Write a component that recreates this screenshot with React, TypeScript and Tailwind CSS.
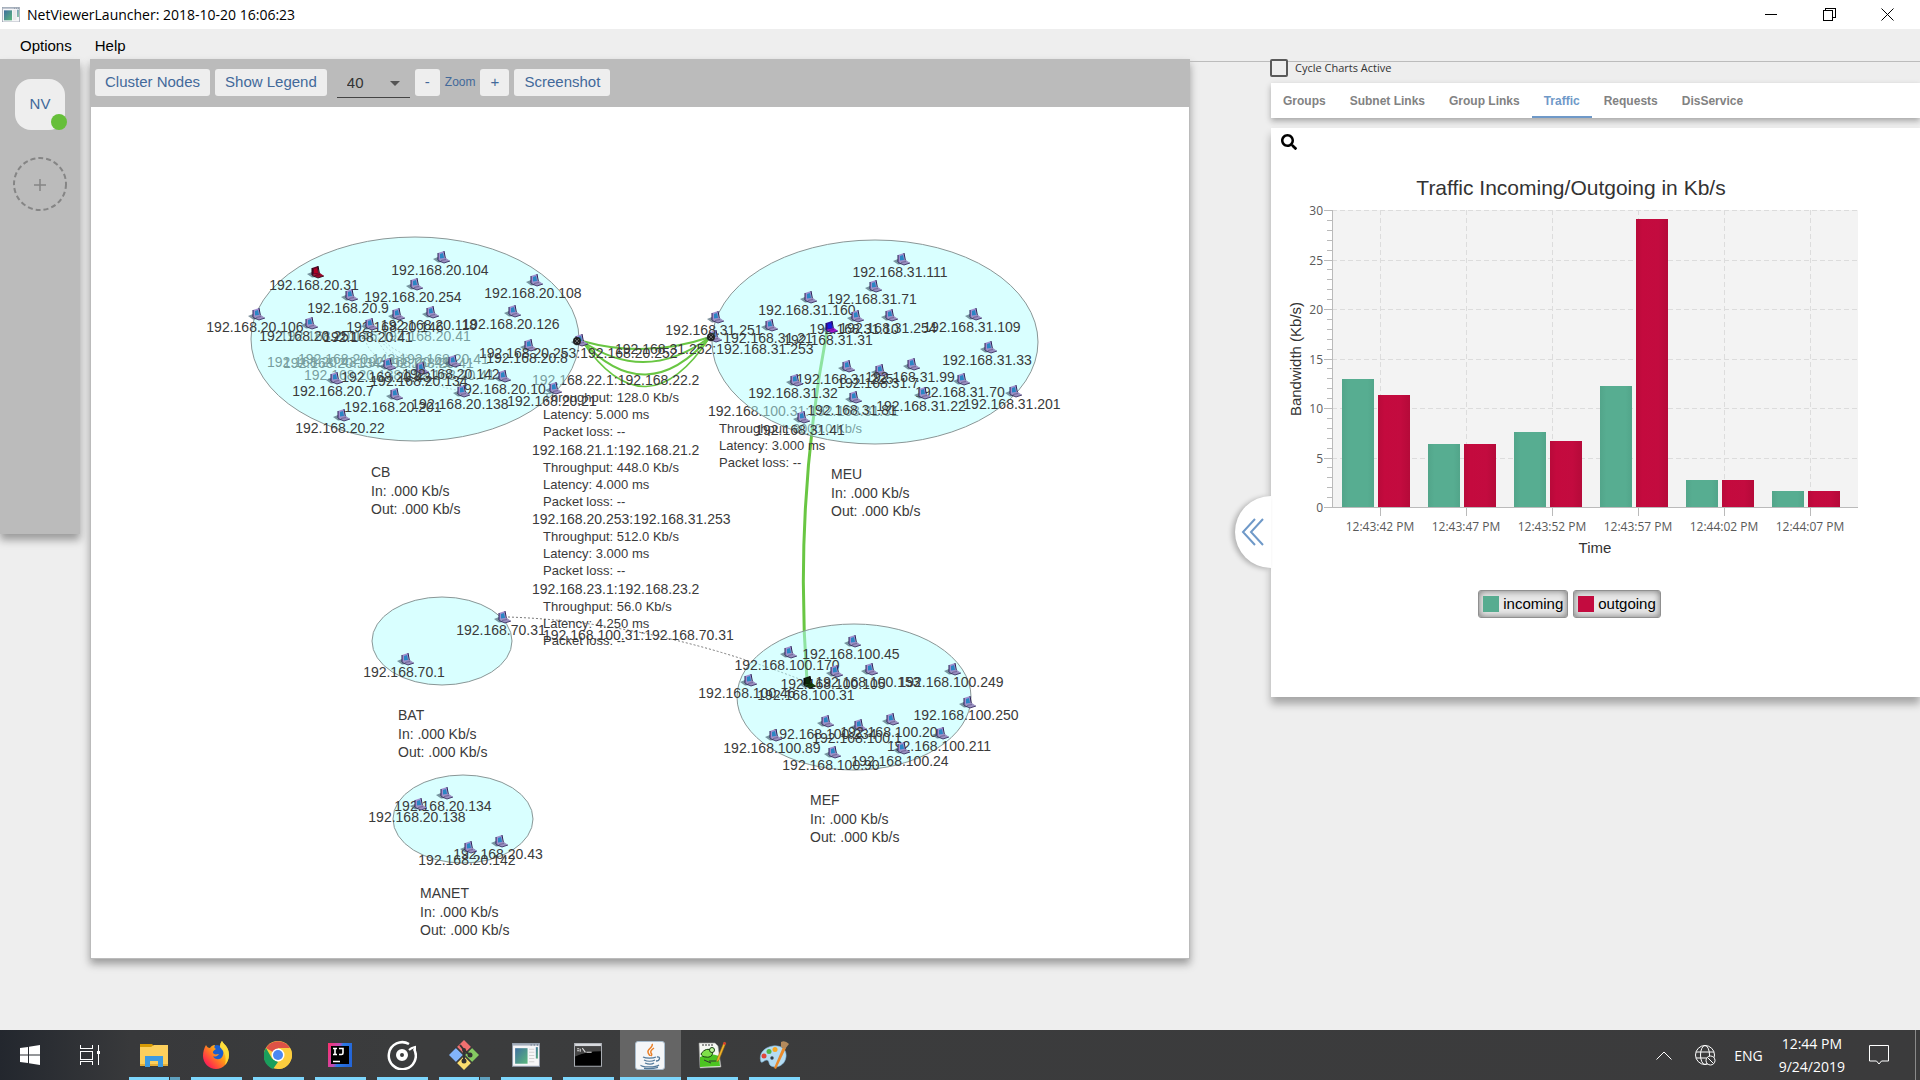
import React from "react";
import { FaSearch } from "react-icons/fa";

type Kind = "normal" | "red" | "purple" | "black";
type Node = { ip: string; x: number; y: number; kind?: Kind };

const nodes: Node[] = [
  { ip: "192.168.20.104", x: 442, y: 257 },
  { ip: "192.168.20.31", x: 316, y: 272, kind: "red" },
  { ip: "192.168.20.108", x: 535, y: 280 },
  { ip: "192.168.20.254", x: 415, y: 284 },
  { ip: "192.168.20.9", x: 350, y: 295 },
  { ip: "192.168.20.106", x: 257, y: 314 },
  { ip: "192.168.20.251", x: 310, y: 323 },
  { ip: "192.168.20.146", x: 397, y: 314 },
  { ip: "192.168.20.118", x: 431, y: 312 },
  { ip: "192.168.20.41", x: 370, y: 324 },
  { ip: "192.168.20.126", x: 513, y: 311 },
  { ip: "192.168.20.8", x: 529, y: 345 },
  { ip: "192.168.20.43", x: 388, y: 364 },
  { ip: "192.168.20.134", x: 421, y: 368 },
  { ip: "192.168.20.142", x: 453, y: 361 },
  { ip: "192.168.20.10", x: 503, y: 376 },
  { ip: "192.168.20.7", x: 335, y: 378 },
  { ip: "192.168.20.201", x: 395, y: 394 },
  { ip: "192.168.20.138", x: 462, y: 391 },
  { ip: "192.168.20.21", x: 554, y: 388 },
  { ip: "192.168.20.22", x: 342, y: 415 },
  { ip: "192.168.31.111", x: 902, y: 259 },
  { ip: "192.168.31.71", x: 874, y: 286 },
  { ip: "192.168.31.160", x: 809, y: 297 },
  { ip: "192.168.31.251", x: 716, y: 317 },
  { ip: "192.168.31.21", x: 770, y: 325 },
  { ip: "192.168.31.10", x: 856, y: 316 },
  { ip: "192.168.31.254", x: 890, y: 315 },
  { ip: "192.168.31.31", x: 830, y: 327, kind: "purple" },
  { ip: "192.168.31.109", x: 974, y: 314 },
  { ip: "192.168.31.33", x: 989, y: 347 },
  { ip: "192.168.31.225", x: 847, y: 366 },
  { ip: "192.168.31.7", x: 880, y: 370 },
  { ip: "192.168.31.99", x: 912, y: 364 },
  { ip: "192.168.31.70", x: 962, y: 379 },
  { ip: "192.168.31.22", x: 923, y: 393 },
  { ip: "192.168.31.201", x: 1014, y: 391 },
  { ip: "192.168.31.32", x: 795, y: 380 },
  { ip: "192.168.31.81", x: 854, y: 397 },
  { ip: "192.168.31.41", x: 802, y: 417 },
  { ip: "192.168.100.45", x: 853, y: 641 },
  { ip: "192.168.100.170", x: 789, y: 652 },
  { ip: "192.168.100.105", x: 835, y: 671 },
  { ip: "192.168.100.153", x: 870, y: 669 },
  { ip: "192.168.100.249", x: 953, y: 669 },
  { ip: "192.168.100.46", x: 749, y: 680 },
  { ip: "192.168.100.31", x: 808, y: 682, kind: "black" },
  { ip: "192.168.100.250", x: 968, y: 702 },
  { ip: "192.168.100.234", x: 826, y: 721 },
  { ip: "192.168.100.1", x: 859, y: 725 },
  { ip: "192.168.100.20", x: 891, y: 719 },
  { ip: "192.168.100.211", x: 941, y: 733 },
  { ip: "192.168.100.89", x: 774, y: 735 },
  { ip: "192.168.100.24", x: 902, y: 748 },
  { ip: "192.168.100.90", x: 833, y: 752 },
  { ip: "192.168.70.31", x: 503, y: 617 },
  { ip: "192.168.70.1", x: 406, y: 659 },
  { ip: "192.168.20.134", x: 445, y: 793 },
  { ip: "192.168.20.138", x: 419, y: 804 },
  { ip: "192.168.20.43", x: 500, y: 841 },
  { ip: "192.168.20.142", x: 469, y: 847 },
];

const groups = [
  { name: "CB", cx: 415, cy: 339, rx: 164, ry: 102, lx: 371, ly: 477 },
  { name: "MEU", cx: 875, cy: 342, rx: 163, ry: 102, lx: 831, ly: 479 },
  { name: "MEF", cx: 854, cy: 697, rx: 117, ry: 73, lx: 810, ly: 805 },
  { name: "BAT", cx: 442, cy: 641, rx: 70, ry: 44, lx: 398, ly: 720 },
  { name: "MANET", cx: 463, cy: 819, rx: 70, ry: 44, lx: 420, ly: 898 },
];

const linkBlocks = [
  { x: 532, y: 385, title: "192.168.22.1:192.168.22.2", rate: "128.0", latency: "5.000" },
  { x: 532, y: 455, title: "192.168.21.1:192.168.21.2", rate: "448.0", latency: "4.000" },
  { x: 532, y: 524, title: "192.168.20.253:192.168.31.253", rate: "512.0", latency: "3.000" },
  { x: 532, y: 594, title: "192.168.23.1:192.168.23.2", rate: "56.0", latency: "4.250" },
  { x: 708, y: 416, title: "192.168.100.31:192.168.31.31", rate: "8000.0", latency: "3.000" },
];

const innerLinks = [
  { x: 280, y: 341, t: "192.168.20.146:192.168.20.41" },
  { x: 298, y: 364, t: "192.168.20.142:192.168.20.41" },
  { x: 267, y: 367, t: "192.168.20.43:192.168.20.41" },
  { x: 283, y: 368, t: "192.168.20.134:192.168.20.41" },
  { x: 304, y: 380, t: "192.168.20.138:192.168.20.41" },
];

const palette: Record<Kind, { body: string; screen: string; base: string; edge: string }> = {
  normal: { body: "#a08fce", screen: "#2a86c4", base: "#9a8fc0", edge: "#2b1f55" },
  red: { body: "#5a0828", screen: "#b00024", base: "#98082a", edge: "#1a0410" },
  purple: { body: "#3010a8", screen: "#1020e0", base: "#a018c8", edge: "#14085a" },
  black: { body: "#101808", screen: "#0a2a0a", base: "#16400c", edge: "#000000" },
};

function Laptop({ x, y, kind = "normal" }: { x: number; y: number; kind?: Kind }) {
  const c = palette[kind];
  return (
    <g transform={`translate(${x} ${y})`}>
      <path d="M-9 2L-4 0L1 5L-4 5.500z" fill="#4d6676" opacity="0.7" />
      <path d="M-4-4L2-6L3 2L-4 3z" fill={c.body} />
      <path d="M-2-3L1-4L2 1L-2 1.500z" fill={c.screen} />
      <path d="M-4-4L-4 3M2-6L3.500 2" stroke={c.edge} strokeWidth="1" />
      <path d="M-4 3L4 1L8 4L2 6z" fill={c.base} />
      <path d="M-4 3.500L2 6L8 4" stroke={c.edge} strokeWidth="0.800" fill="none" />
      <path d="M-1 3.500L4 2.500" stroke={c.edge} strokeWidth="0.600" opacity="0.6" />
    </g>
  );
}

function Router({ x, y }: { x: number; y: number }) {
  return (
    <g>
      <Laptop x={x} y={y} />
      <circle cx={x - 3} cy={y + 1} r="4" fill="#222" />
      <path d={`M${x - 5} ${y - 1}l4 4m0-4l-4 4`} stroke="#888" strokeWidth="0.700" />
    </g>
  );
}

function NetworkMap() {
  return (
    <svg
      viewBox="91 107 1098 851"
      preserveAspectRatio="xMinYMin meet"
      className="block w-full font-['Liberation_Sans',Arial,sans-serif] text-[14px]"
      fill="#3a3a3a"
      role="img"
      aria-label="Network map"
    >
      <g fill="none" stroke="#69c643">
        <path d="M582 341Q646 359 710 337" strokeWidth="2" />
        <path d="M582 341Q646 385 710 337" strokeWidth="2" />
        <path d="M582 341Q646 410 710 337" strokeWidth="2" />
        <path d="M582 341Q646 434 710 337" strokeWidth="1.500" />
        <path d="M827 331Q794 506 807 681" strokeWidth="3" />
      </g>
      <g fill="none" stroke="#777" strokeDasharray="2 2" strokeWidth="1">
        <path d="M508 617Q655 622 807 682" />
        <path d="M370 324Q355 345 388 364M370 324Q385 355 421 368M370 324Q395 365 453 361M370 324Q390 380 462 391" opacity="0.6" />
      </g>
      {innerLinks.map((l) => (
        <text key={l.t} x={l.x} y={l.y}>{l.t}</text>
      ))}
      {linkBlocks.map((b) => (
        <g key={b.title}>
          <text x={b.x} y={b.y}>{b.title}</text>
          <g className="text-[13px]">
            <text x={b.x + 11} y={b.y + 17}>Throughput: {b.rate} Kb/s</text>
            <text x={b.x + 11} y={b.y + 34}>Latency: {b.latency} ms</text>
            <text x={b.x + 11} y={b.y + 51}>Packet loss: --</text>
          </g>
        </g>
      ))}
      <text x="543" y="640">192.168.100.31:192.168.70.31</text>
      {groups.map((g) => (
        <g key={g.name}>
          <ellipse cx={g.cx} cy={g.cy} rx={g.rx} ry={g.ry} fill="rgba(179,255,255,0.5)" stroke="#8a9696" strokeWidth="1" />
          <text x={g.lx} y={g.ly}>{g.name}</text>
          <text x={g.lx} y={g.ly + 19}>In: .000 Kb/s</text>
          <text x={g.lx} y={g.ly + 37}>Out: .000 Kb/s</text>
        </g>
      ))}
      <Router x={580} y={340} />
      <Router x={714} y={336} />
      {nodes.map((n) => (
        <g key={n.ip + n.x}>
          <Laptop x={n.x} y={n.y} kind={n.kind} />
          <text x={n.x - 2} y={n.y + 18} textAnchor="middle">{n.ip}</text>
        </g>
      ))}
      <text x="479" y="358">192.168.20.253:192.168.20.252</text>
      <text x="615" y="354">192.168.31.252:192.168.31.253</text>
    </svg>
  );
}

const samples = [
  { t: "12:43:42 PM", i: 12.9, o: 11.3 },
  { t: "12:43:47 PM", i: 6.4, o: 6.4 },
  { t: "12:43:52 PM", i: 7.6, o: 6.7 },
  { t: "12:43:57 PM", i: 12.2, o: 29.1 },
  { t: "12:44:02 PM", i: 2.7, o: 2.7 },
  { t: "12:44:07 PM", i: 1.6, o: 1.6 },
];

function TrafficChart() {
  const y = (v: number) => Math.round(507 - v * 9.9);
  return (
    <svg
      viewBox="1271 160 649 410"
      preserveAspectRatio="xMidYMin meet"
      className="block w-full font-['Liberation_Sans',Arial,sans-serif] text-[15px]"
      role="img"
      aria-label="Traffic Incoming/Outgoing in Kb/s"
    >
      <defs>
        <linearGradient id="in"><stop offset="0" stopColor="#52a58a" /><stop offset="0.2" stopColor="#57ad91" /><stop offset="0.8" stopColor="#57ad91" /><stop offset="1" stopColor="#52a58a" /></linearGradient>
        <linearGradient id="out"><stop offset="0" stopColor="#b80a3a" /><stop offset="0.2" stopColor="#c40a3e" /><stop offset="0.7" stopColor="#c30b3f" /><stop offset="1" stopColor="#b50a39" /></linearGradient>
      </defs>
      <text x="1571" y="195" textAnchor="middle" fill="#333" className="text-[21px]">Traffic Incoming/Outgoing in Kb/s</text>
      <rect x="1332" y="210" width="526" height="297" fill="#f3f3f3" />
      <g stroke="#dcdcdc" strokeDasharray="5 3" shapeRendering="crispEdges">
        {[5, 10, 15, 20, 25, 30].map((v) => <path key={v} d={`M1332 ${y(v)}.5H1858`} />)}
        {samples.map((s, k) => <path key={s.t} d={`M${1380 + k * 86}.5 210V507`} />)}
      </g>
      <g stroke="#bababa" shapeRendering="crispEdges">
        <path d="M1332.5 210V507M1324 507.500H1858" />
        {Array.from({ length: 31 }, (_, v) => (
          <path key={v} d={`M${v % 5 ? 1327 : 1324} ${y(v)}.5H1332`} />
        ))}
        {samples.map((s, k) => <path key={s.t} d={`M${1380 + k * 86}.5 507V516`} />)}
      </g>
      <g fill="#595959" className="font-['Open_Sans',sans-serif] text-[12px]">
        {[0, 5, 10, 15, 20, 25, 30].map((v) => (
          <text key={v} x="1323" y={y(v) + 5} textAnchor="end">{v}</text>
        ))}
        {samples.map((s, k) => (
          <text key={s.t} x={1380 + k * 86} y="531" textAnchor="middle">{s.t}</text>
        ))}
      </g>
      {samples.map((s, k) => (
        <g key={s.t}>
          <rect x={1342 + k * 86} y={y(s.i)} width="32" height={507 - y(s.i)} fill="url(#in)" />
          <rect x={1378 + k * 86} y={y(s.o)} width="32" height={507 - y(s.o)} fill="url(#out)" />
        </g>
      ))}
      <text x="1595" y="553" textAnchor="middle" fill="#333">Time</text>
      <text transform="translate(1301 359) rotate(-90)" textAnchor="middle" fill="#333">Bandwidth (Kb/s)</text>
    </svg>
  );
}

function AppWindowIcon({ w }: { w: string }) {
  return (
    <svg viewBox="0 0 27 23" className={w}>
      <defs><linearGradient id="aw" x2="1" y2="1"><stop stopColor="#3f6fa0" /><stop offset="1" stopColor="#5cb87c" /></linearGradient></defs>
      <rect x="0.500" y="0.500" width="26" height="22" fill="#f6f6f8" stroke="#8f99a8" />
      <path d="M1 1.500h25" stroke="#a3adbb" strokeWidth="2" />
      <path d="M18 2h1m2 0h1m2 0h1" stroke="#536175" />
      <rect x="3" y="5" width="12" height="15" fill="url(#aw)" />
      <path d="M16.500 6h5m-5 3h5m-5 3h5m-5 3h5m-5 3h5" stroke="#d2d2d2" />
      <rect x="23" y="4" width="2" height="11" fill="url(#aw)" />
    </svg>
  );
}

const taskIcons: { name: string; more?: boolean; icon: React.ReactNode }[] = [
  { name: "File Explorer", more: true, icon: (
    <svg viewBox="0 0 28 24" className="w-7"><path d="M0 1h12l3 3v4H0z" fill="#d69a05" /><path d="M0 4h11l3-2h14v21H0z" fill="#fccf5c" /><path d="M0 21h28v2H0z" fill="#e5ae36" /><path d="M5 24V13h18v11h-5v-6h-8v6z" fill="#3d9ae0" /></svg>
  ) },
  { name: "Firefox", icon: (
    <svg viewBox="0 0 28 28" className="w-7"><defs><linearGradient id="ff" x1="1" y1="0" x2="0" y2="1"><stop stopColor="#fff44f" /><stop offset="0.45" stopColor="#ff9a16" /><stop offset="0.8" stopColor="#ff2d4a" /><stop offset="1" stopColor="#d8127d" /></linearGradient></defs><circle cx="15" cy="13" r="9" fill="#1a5fd0" /><path d="M4 4c1 2 2 3 4 3 2-3 4-3 5-3-1 2-1 3 1 4-3 2-4 3-2 5 2 1 3 0 5 0-2 3-5 3-6 2 2 5 9 4 10-1 1-4 0-6-3-8 0-3 1-5 2-6 1 3 7 5 7 14 0 8-6 14-13 14S1 22 1 15c0-4 1-8 3-11z" fill="url(#ff)" /><path d="M18 6c0-3 1-5 2-6 1 3 7 5 7 14 0 4-2 8-4 10 1-4 1-9-1-12-1-3-3-4-4-6z" fill="#ffe23c" opacity="0.8" /></svg>
  ) },
  { name: "Chrome", icon: (
    <svg viewBox="0 0 28 28" className="w-7"><circle cx="14" cy="14" r="14" fill="#fccd3e" /><path d="M14 14L2 7A14 14 0 0 1 26 7H14z" fill="#de5246" /><path d="M2 7l6 10.500 6 3.500-5 7A14 14 0 0 1 2 7z" fill="#1a9e5c" /><path d="M26 7H14v7l5 3-6 11A14 14 0 0 0 26 7z" fill="#fccd3e" /><circle cx="14" cy="14" r="6.500" fill="#fff" /><circle cx="14" cy="14" r="5" fill="#4a88f2" /></svg>
  ) },
  { name: "IntelliJ IDEA", icon: (
    <svg viewBox="0 0 24 24" className="w-6"><defs><linearGradient id="ij" x2="1" y2="0.300"><stop stopColor="#fe2f6a" /><stop offset="0.45" stopColor="#c24bb5" /><stop offset="0.6" stopColor="#2a7ce8" /><stop offset="1" stopColor="#2466d8" /></linearGradient></defs><path d="M0 0h24v24H0z" fill="url(#ij)" /><path d="M3 3h18v18H3z" fill="#000" /><path d="M5 5.500h4M7 5v7M5 11.500h4M11 5.500h4V10q0 1.500-1.500 1.500H11M5 18.500h7" stroke="#fff" strokeWidth="1.600" fill="none" /></svg>
  ) },
  { name: "Music", icon: (
    <svg viewBox="0 0 30 30" className="w-[30px]" fill="none" stroke="#fff"><path d="M22 4A13.500 13.500 0 1 0 27 9" strokeWidth="2.500" /><path d="M22 10q2-2 6-3v5" strokeWidth="2" /><circle cx="15" cy="15" r="4" strokeWidth="4" /></svg>
  ) },
  { name: "Git", more: true, icon: (
    <svg viewBox="0 0 30 30" className="w-[30px]"><path d="M15 0l7 7-7 7-7-7z" fill="#f07070" /><path d="M7 8l7 7-7 7-7-7z" fill="#82b4fb" /><path d="M23 8l7 7-7 7-7-7z" fill="#85cb62" /><path d="M15 16l7 7-7 7-7-7z" fill="#fbdd6e" /><path d="M7.500 7.500l15 15M22.500 7.500l-15 15" stroke="#3b3b3c" strokeWidth="1.200" /><path d="M11 5l4 5v12M15 10l6 5" stroke="#333" strokeWidth="2" fill="none" /><circle cx="15" cy="10" r="2" fill="#333" /><circle cx="15" cy="21" r="2.500" fill="#333" /><circle cx="21" cy="15" r="2.500" fill="#333" /></svg>
  ) },
  { name: "NetViewer", icon: <AppWindowIcon w="w-7" /> },
  { name: "Command Prompt", icon: (
    <svg viewBox="0 0 27 23" className="w-7"><path d="M0.500.5h26v22H.5z" fill="#000" stroke="#a9adb3" /><path d="M1 2h25" stroke="#d8dade" strokeWidth="2.500" /><path d="M1 3.500h25V8Q12 8 1 13z" fill="#444" /><path d="M3 5.500h2m-2 2h2m1-2v3M8 5l3 4m1 0h5" stroke="#ddd" fill="none" /></svg>
  ) },
  { name: "Java", icon: (
    <svg viewBox="0 0 30 29" className="w-[30px]"><rect x="0.500" y="0.500" width="29" height="28" rx="2.500" fill="#f4f6f8" stroke="#a8bccd" /><path d="M17 3c2 3-5 5-4 8 0 2 2 3 2 4M19 7c-3 2-4 3-3 5 1 1 1 2 0 3" stroke="#ea8028" strokeWidth="1.500" fill="none" /><path d="M8 16c3 1.500 10 1.500 13 0M9 19c3 1.500 8 1.500 11 0M10 22c3 1.300 7 1.300 9 0M22 16c4-1 3 4-1 4M6 24c-1 2 14 3 18 0M9 27.300c5 .5 10 .2 14-1" stroke="#52799a" strokeWidth="1.300" fill="none" /></svg>
  ) },
  { name: "Notepad++", icon: (
    <svg viewBox="0 0 30 28" className="w-[30px]"><path d="M2 2h16l3 3 3 21-21 1z" fill="#f5f7f2" stroke="#999" strokeWidth="0.600" /><path d="M3 16q9-5 19-1l1 10-20 1z" fill="#4cc421" /><path d="M4 13c3-5 8-6 11-3 2 4-2 7-6 6-3 0-4-1-5-3z" fill="#7ee04a" stroke="#183f12" /><circle cx="15" cy="9" r="2.500" fill="#bdf59a" stroke="#183f12" /><path d="M7 19l7 3M12 20h7M6 3v2m3-2v2m3-2v2m3-2v2" stroke="#333" /><path d="M27 1l2 1-7 17-2 2 0-3z" fill="#f0b429" stroke="#8a5d14" strokeWidth="0.500" /><path d="M27 1l2 1-1 2-2-1z" fill="#d33" /></svg>
  ) },
  { name: "Paint", icon: (
    <svg viewBox="0 0 30 28" className="w-[30px]"><path d="M2 21C-1 12 6 6 14 5c9-1 14 4 13 11-1 8-9 12-15 9-3-2-1-5-4-6-3 0-4 3-6 2z" fill="#b5dcf2" stroke="#7bb4d8" strokeWidth="0.600" /><circle cx="5" cy="15" r="2.500" fill="#e0463c" /><circle cx="10" cy="10.500" r="2.500" fill="#4fb648" /><circle cx="16" cy="8.500" r="2.500" fill="#f7a823" /><circle cx="13" cy="17" r="1.700" fill="#333f4a" /><path d="M24 6L15 27l2 1L27 7z" fill="#e98a2b" /><path d="M22 1q4-2 8 2l-4 5-4-2z" fill="#b48a5c" /></svg>
  ) },
];

export default function App() {
  const tabs = ["Groups", "Subnet Links", "Group Links", "Traffic", "Requests", "DisService"];
  const tool = "h-[27px] rounded-[3px] bg-[#eeeeee] text-[15px] text-[#42699a]";
  return (
    <div className="flex min-h-screen flex-col overflow-x-hidden bg-[#eeeeee] font-['Liberation_Sans',Arial,sans-serif] text-[15px] text-black">
      <header className="flex h-[29px] shrink-0 items-center bg-white">
        <span className="ml-[2px] mr-[7px]"><AppWindowIcon w="w-[18px]" /></span>
        <h1 className="font-['Open_Sans',sans-serif] text-[14px]">NetViewerLauncher: 2018-10-20 16:06:23</h1>
        <div className="ml-auto flex">
          <button aria-label="Minimize" className="flex h-[29px] w-[58px] items-center justify-center">
            <svg viewBox="0 0 12 12" className="w-3" stroke="#000" shapeRendering="crispEdges"><path d="M0 5.500h12" /></svg>
          </button>
          <button aria-label="Restore" className="flex h-[29px] w-[58px] items-center justify-center">
            <svg viewBox="0 0 13 13" className="w-[13px]" fill="none" stroke="#000" shapeRendering="crispEdges"><path d="M.5 2.500h9v10h-9zM2.500 2.500v-2h10v9h-3" /></svg>
          </button>
          <button aria-label="Close" className="mr-1 flex h-[29px] w-[58px] items-center justify-center">
            <svg viewBox="0 0 13 13" className="w-[13px]" stroke="#000"><path d="M.5.5l12 12m0-12l-12 12" /></svg>
          </button>
        </div>
      </header>
      <nav className="flex h-[30px] shrink-0 items-center gap-[23px] pl-5 pt-1">
        <button>Options</button>
        <button>Help</button>
      </nav>

      <main className="flex flex-1 items-start">
        <aside className="flex h-[475px] w-20 shrink-0 flex-col items-center bg-[#bbbbbb] pt-5 shadow-[0_6px_8px_rgba(0,0,0,0.35)]">
          <button className="relative h-[51px] w-[50px] rounded-[16px] bg-[#eeeeee] text-[#42699a]">
            NV
            <span className="absolute bottom-0 -right-[2px] size-4 rounded-full bg-[#66bf39]" />
          </button>
          <button aria-label="Add" className="mt-[27px]">
            <svg viewBox="0 0 54 54" className="w-[54px]" fill="none" stroke="#858585"><circle cx="27" cy="27" r="26" strokeWidth="2" strokeDasharray="5 3" /><path d="M21 28h12M27 22v12" strokeWidth="1.500" /></svg>
          </button>
        </aside>

        <div className="flex min-w-0 flex-1 border-t border-transparent">
          <section className="-mt-px ml-[10px] min-w-0 flex-1 bg-[#bbbbbb] pb-px shadow-[0_5px_8px_rgba(0,0,0,0.35)]">
            <div className="flex h-12 items-center gap-[5px] px-[5px] pb-[2px]">
              <button className={tool + " px-[10px]"}>Cluster Nodes</button>
              <button className={tool + " px-[10px]"}>Show Legend</button>
              <div className="relative ml-[5px] w-[73px] border-b border-[#444] pt-1">
                <select aria-label="Interval" className="h-[26px] w-full appearance-none bg-transparent pl-[10px] text-[#333]">
                  <option>40</option>
                </select>
                <span className="pointer-events-none absolute right-[10px] top-[14px] border-x-[5px] border-t-[5px] border-x-transparent border-t-[#555]" />
              </div>
              <button className={tool + " w-[25px]"}>-</button>
              <span className="text-[12px] text-[#42699a]">Zoom</span>
              <button className={tool + " w-[29px]"}>+</button>
              <button className={tool + " px-[10px]"}>Screenshot</button>
            </div>
            <div className="mx-px bg-white"><NetworkMap /></div>
          </section>

          <div className="w-[730px] shrink-0">
            <div className="mt-px border-t border-[#bcbcbc]" />
            <div className="-mt-[3px] ml-[81px]">
              <label className="-ml-px flex h-[18px] items-center gap-[7px] font-['Open_Sans',sans-serif] text-[11px] text-[#333]">
                <input type="checkbox" className="size-[18px] appearance-none rounded-[2px] border-2 border-[#5a5a5a] bg-[#eeeeee]" />
                Cycle Charts Active
              </label>
              <div role="tablist" className="mt-[6px] flex h-[35px] bg-white shadow-[0_3px_6px_rgba(0,0,0,0.3)]">
                {tabs.map((t) => (
                  <button
                    key={t}
                    role="tab"
                    aria-selected={t === "Traffic"}
                    className={
                      t === "Traffic"
                        ? "border-b-2 border-[#6f99c8] px-3 pt-[2px] text-[12px] font-bold text-[#6f99c8]"
                        : "border-b-2 border-transparent px-3 pt-[2px] text-[12px] font-bold text-[#828282]"
                    }
                  >
                    {t}
                  </button>
                ))}
              </div>
              <div className="relative mt-[10px] bg-white pb-[79px] shadow-[0_7px_8px_rgba(0,0,0,0.3)]">
                <button aria-label="Show groups panel" className="absolute -left-9 top-[368px] flex h-[72px] w-9 items-center justify-center rounded-l-full bg-white shadow-[-3px_1px_5px_rgba(0,0,0,0.25)]">
                  <svg viewBox="0 0 24 28" className="w-6" fill="none" stroke="#6f99c8" strokeWidth="2"><path d="M14 1L2 14l12 13M22 1L10 14l12 13" /></svg>
                </button>
                <div className="h-8 pl-[10px] pt-[6px]">
                  <button aria-label="Search" className="block text-[16px]"><FaSearch /></button>
                </div>
                <TrafficChart />
                <div className="mt-5 flex justify-center gap-[5px] pr-[52px]">
                  <button className="flex h-7 items-center gap-1 rounded-[3px] border border-[#909090] bg-[#e8e8e8] px-1 shadow-[inset_0_0_7px_rgba(0,0,0,0.5)]">
                    <span className="size-4 bg-[#57ac90]" />incoming
                  </button>
                  <button className="flex h-7 items-center gap-1 rounded-[3px] border border-[#909090] bg-[#e8e8e8] px-1 shadow-[inset_0_0_7px_rgba(0,0,0,0.5)]">
                    <span className="size-4 bg-[#c30b3f]" />outgoing
                  </button>
                </div>
              </div>
            </div>
          </div>
        </div>
      </main>

      <footer className="flex h-[50px] shrink-0 bg-[linear-gradient(90deg,#23272e_0px,#38393b_130px,#3b3c3d_400px,#3b3b3c_100%)] font-['Open_Sans',sans-serif] text-[14px] text-white">
        <button aria-label="Start" className="flex w-[60px] items-center justify-center">
          <svg viewBox="0 0 20 20" className="w-5" fill="#fff"><path d="M0 3l8-1v7.500H0zM9 1.800L20 0v9.500H9zM0 10.500h8V18l-8-1zM9 10.500h11V20L9 18.200z" /></svg>
        </button>
        <button aria-label="Task View" className="mr-1 flex w-[60px] items-center justify-center">
          <svg viewBox="0 0 20 20" className="w-5" fill="none" stroke="#fff" shapeRendering="crispEdges"><path d="M.5 0v3.500h12V0M.5 6.500h12v8H.5zM.5 20v-3.500h12V20M18.500 0v20" /><path d="M17 6h3v3h-3z" fill="#fff" stroke="none" /></svg>
        </button>
        <div className="flex gap-px">
          {taskIcons.map((a) => {
            const active = a.name === "Java";
            return (
              <button
                key={a.name}
                aria-label={a.name}
                className={active ? "flex w-[61px] flex-col bg-[#656565]" : "flex w-[61px] flex-col px-[5px]"}
              >
                <span className="flex h-[47px] w-full items-center justify-center pr-[2px] pt-[3px]">{a.icon}</span>
                <span className="flex h-[3px] w-full bg-[#7dd6fc]">
                  {a.more && <span className="ml-auto h-full w-[11px] border-l border-[#333] bg-[#5fa0bd]" />}
                </span>
              </button>
            );
          })}
        </div>
        <div className="ml-auto flex items-center">
          <button aria-label="Show hidden icons" className="mr-[22px]">
            <svg viewBox="0 0 16 9" className="w-4" fill="none" stroke="#fff"><path d="M.5 8.500L8 1l7.500 7.500" /></svg>
          </button>
          <button aria-label="Network" className="mr-[18px]">
            <svg viewBox="0 0 22 22" className="w-[22px]" fill="none" stroke="#fff"><circle cx="11" cy="11" r="9.500" /><ellipse cx="11" cy="11" rx="4.500" ry="9.500" /><path d="M2 8h18M2 14h12" /><circle cx="16.500" cy="16.500" r="4.500" fill="#3b3b3c" /><path d="M13.500 13.500l6 6" /></svg>
          </button>
          <span>ENG</span>
          <button className="mx-4 text-center leading-[23px]">
            12:44 PM<br />9/24/2019
          </button>
          <button aria-label="Notifications" className="ml-2 mr-[26px]">
            <svg viewBox="0 0 20 20" className="w-5" fill="none" stroke="#fff"><path d="M.5.5h19v15.500h-7L10 19l-2.500-3h-7z" /></svg>
          </button>
          <span className="mr-1 h-full w-px bg-[#8a8a8a]" />
        </div>
      </footer>
    </div>
  );
}
